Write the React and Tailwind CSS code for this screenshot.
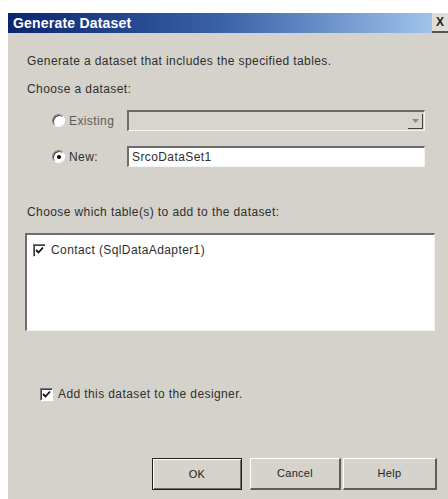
import { useState } from 'react'

const FONT = { fontFamily: '"Liberation Sans", Arial, sans-serif' }

// classic sunken 3d edge used by text boxes and the list
const sunken = 'border-t-2 border-l-2 border-t-[#6f6d69] border-l-[#6f6d69] border-b border-r border-b-[#f4f3f0] border-r-[#f4f3f0]'

function Radio({ checked, onClick }) {
  return (
    <span
      onClick={onClick}
      className="relative inline-flex w-[13px] h-[13px] rounded-full bg-white border border-t-[#8a8782] border-l-[#8a8782] border-b-[#ffffff] border-r-[#ffffff] shadow-[inset_1px_1px_0_#3f3d3a] items-center justify-center cursor-default"
    >
      {checked && <span className="w-[4px] h-[4px] rounded-full bg-black" />}
    </span>
  )
}

function Check({ checked, onClick }) {
  return (
    <span
      onClick={onClick}
      className="inline-flex w-[13px] h-[13px] bg-white border border-t-[#7c7a76] border-l-[#7c7a76] border-b-white border-r-white shadow-[inset_1px_1px_0_#3f3d3a] items-center justify-center cursor-default"
    >
      {checked && (
        <svg width="9" height="9" viewBox="0 0 9 9">
          <path d="M1 4 L3.5 6.5 L8 1.5" stroke="#111" strokeWidth="1.8" fill="none" />
        </svg>
      )}
    </span>
  )
}

function Button({ children, isDefault, className = '' }) {
  return (
    <button
      className={[
        'h-[32px] bg-[#d6d3cc] text-[11px] text-[#222] tracking-[0.3px]',
        isDefault
          ? 'border border-[#1e1e1e] shadow-[inset_1px_1px_0_#fff,inset_-1px_-1px_0_#6d6b67]'
          : 'border-t border-l border-t-white border-l-white border-b-2 border-r-2 border-b-[#5e5c58] border-r-[#5e5c58]',
        className,
      ].join(' ')}
    >
      {children}
    </button>
  )
}

export default function App() {
  const [mode, setMode] = useState('new')
  const [name, setName] = useState('SrcoDataSet1')
  const [contact, setContact] = useState(true)
  const [addToDesigner, setAddToDesigner] = useState(true)

  return (
    <div
      className="w-[448px] h-[499px] bg-white pt-[13px] pl-[8px] overflow-hidden text-[12px] tracking-[0.4px] text-[#2e2e2e]"
      style={FONT}
    >
      <div className="flex flex-col h-full bg-[#d5d2cb]">
        <div className="h-[20px] flex items-center bg-gradient-to-r from-[#0b2470] via-[#3c64a8] to-[#a9cbf1]">
          <div className="flex-1 pl-[5px] text-white font-bold text-[14px] tracking-[0.2px]">Generate Dataset</div>
          <div className="w-[16px] h-[20px] bg-[#e0ddd6] flex items-center justify-center border-b-2 border-b-[#555]">
            <span className="text-[#222] font-bold text-[12px] leading-none tracking-normal">X</span>
          </div>
        </div>

        <div className="flex flex-col pl-[19px] pr-[13px]">
          <div className="mt-[20px] h-[16px] leading-[16px]">Generate a dataset that includes the specified tables.</div>
          <div className="mt-[12px] h-[16px] leading-[16px]">Choose a dataset:</div>

          <div className="mt-[13px] flex items-center h-[21px]">
            <div className="w-[100px] pl-[25px] flex items-center gap-[4px] text-[#5a5956]">
              <Radio checked={mode === 'existing'} onClick={() => setMode('existing')} />
              <span>Existing</span>
            </div>
            <div className={'w-[298px] h-[21px] bg-[#d8d5cf] flex justify-end items-center ' + sunken}>
              <span className="w-[15px] h-[15px] mr-[1px] border-r border-b border-r-[#404040] border-b-[#404040] flex items-center justify-center">
                <svg width="7" height="4" viewBox="0 0 7 4">
                  <path d="M0 0 H7 L3.5 4 Z" fill="#8d8a85" />
                </svg>
              </span>
            </div>
          </div>

          <div className="mt-[15px] flex items-center h-[21px]">
            <div className="w-[100px] pl-[25px] flex items-center gap-[4px]">
              <Radio checked={mode === 'new'} onClick={() => setMode('new')} />
              <span>New:</span>
            </div>
            <input
              value={name}
              onChange={(e) => setName(e.target.value)}
              className={'w-[298px] h-[21px] bg-white px-[3px] text-[12px] outline-none ' + sunken}
            />
          </div>

          <div className="mt-[37px] h-[16px] leading-[16px]">Choose which table(s) to add to the dataset:</div>

          <div className={'mt-[13px] -ml-[2px] w-[410px] h-[98px] bg-white px-[6px] pt-[6px] ' + sunken}>
            <label className="flex items-center gap-[5px]">
              <Check checked={contact} onClick={() => setContact(!contact)} />
              <span>Contact (SqlDataAdapter1)</span>
            </label>
          </div>

          <label className="mt-[54px] ml-[13px] flex items-center gap-[5px]">
            <Check checked={addToDesigner} onClick={() => setAddToDesigner(!addToDesigner)} />
            <span>Add this dataset to the designer.</span>
          </label>

          <div className="mt-[55px] flex justify-end pr-[-2px] mr-[-2px]">
            <Button isDefault className="w-[90px]">OK</Button>
            <Button className="w-[91px] ml-[8px]">Cancel</Button>
            <Button className="w-[94px] ml-[2px]">Help</Button>
          </div>
        </div>
      </div>
    </div>
  )
}
